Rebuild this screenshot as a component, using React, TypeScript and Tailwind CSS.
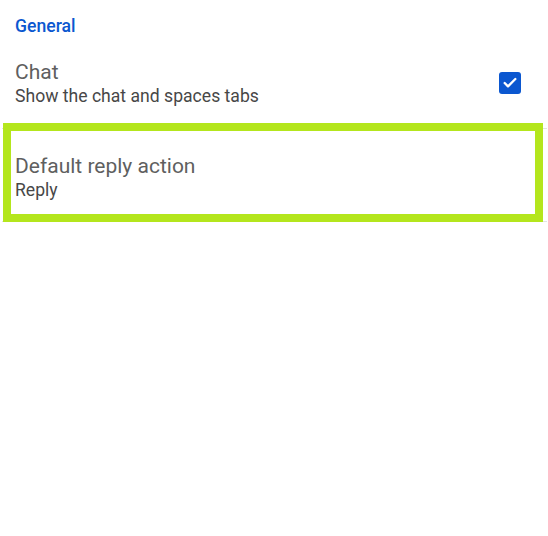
import { Check } from 'lucide-react';

interface SettingRowProps {
  title: string;
  subtitle: string;
  checked?: boolean;
  className?: string;
}

function SettingRow({ title, subtitle, checked, className }: SettingRowProps) {
  return (
    <div
      className={`flex items-center justify-between border-b border-[#e3e3e3] pl-[13px] pr-[26px] ${className ?? ''}`}
    >
      <div className="flex flex-col">
        <span className="text-[21px] leading-[26px] text-[#5f5f5f]">{title}</span>
        <span className="text-[17.6px] leading-[22px] text-[#474747]">{subtitle}</span>
      </div>
      {checked !== undefined && (
        <div className="flex h-[22px] w-[22px] items-center justify-center rounded-[3px] bg-[#0b57d0]">
          <Check size={16} strokeWidth={3.5} className="text-white" />
        </div>
      )}
    </div>
  );
}

export default function App() {
  return (
    <div
      className="relative h-[536px] w-[548px] bg-white"
      style={{ fontFamily: 'Roboto, "Noto Sans", sans-serif' }}
    >
      <div className="px-[15px] pt-[14px]">
        <h2 className="text-[17.6px] font-medium leading-[24px] text-[#0b57d0]">General</h2>
      </div>
      <div className="ml-[2px] mr-[1px]">
        <SettingRow
          title="Chat"
          subtitle="Show the chat and spaces tabs"
          checked
          className="h-[91px]"
        />
        <SettingRow title="Default reply action" subtitle="Reply" className="h-[93px] pt-[3px]" />
      </div>

      {/* highlight annotation */}
      <div className="pointer-events-none absolute left-[3px] top-[123px] h-[99px] w-[540px] border-[8px] border-[#b4e61d]" />
    </div>
  );
}
